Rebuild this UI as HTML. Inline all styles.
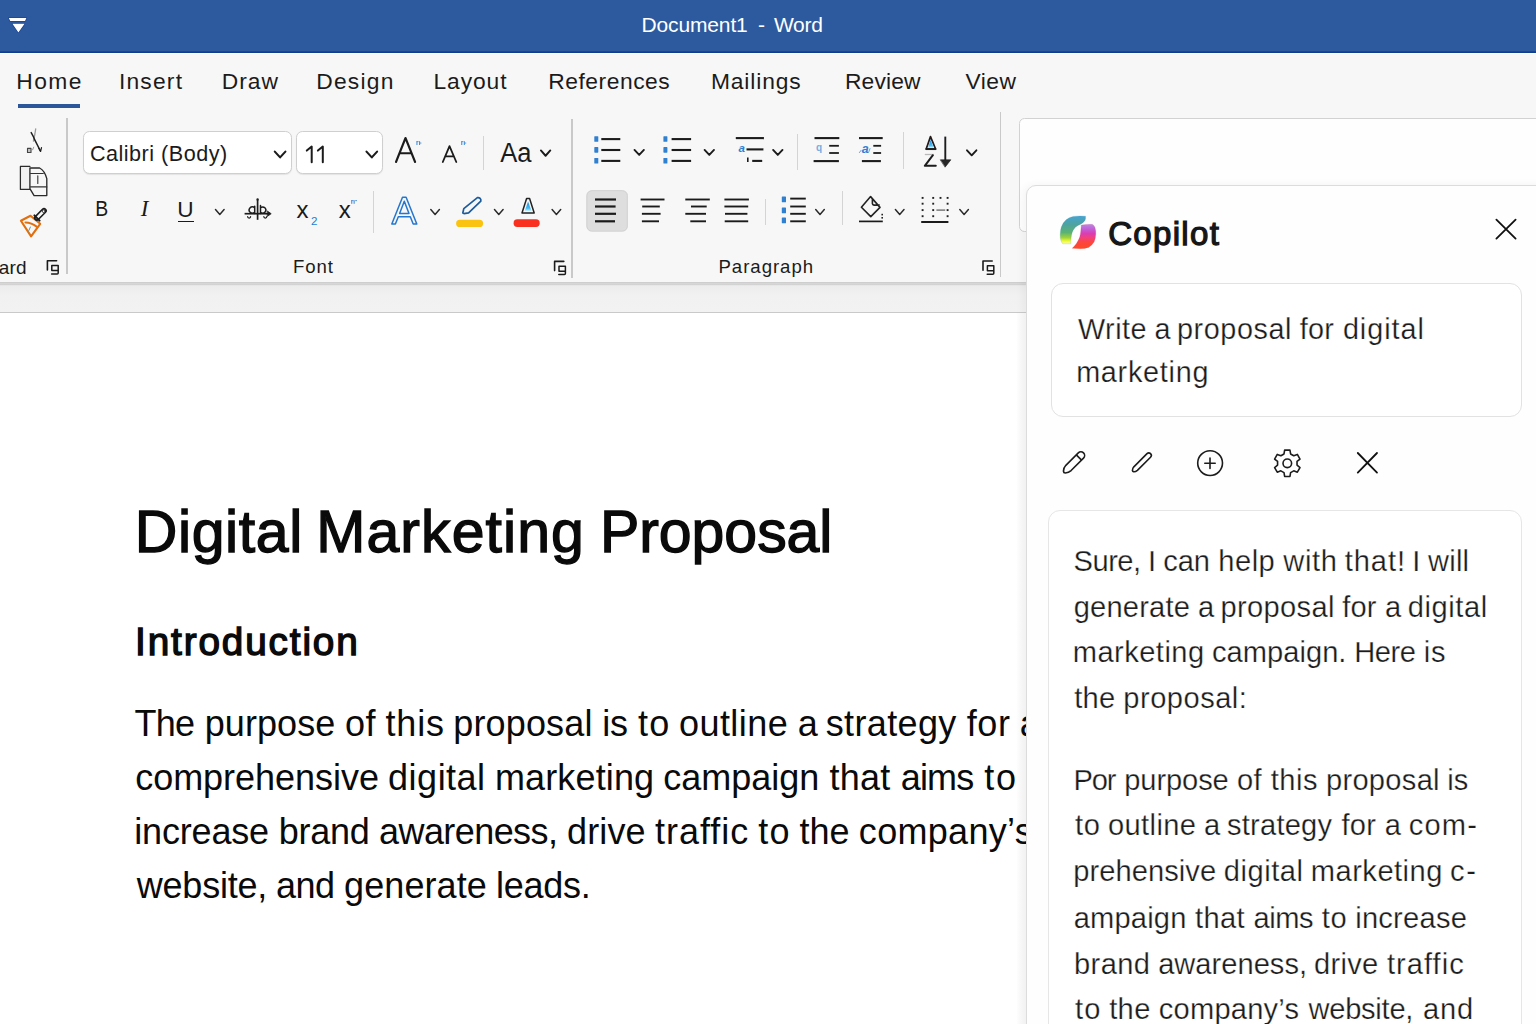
<!DOCTYPE html>
<html lang="en"><head><meta charset="utf-8"><title>Document1 - Word</title>
<style>
html,body{margin:0;padding:0;}
body{width:1536px;height:1024px;overflow:hidden;position:relative;background:#fff;font-family:"Liberation Sans",sans-serif;}
.t{position:absolute;white-space:pre;margin:0;padding:0;}
.a{position:absolute;}
svg{position:absolute;left:0;top:0;overflow:visible;}
.sf{font-family:"Liberation Serif",serif;}

</style></head>
<body>
<div class="a" style="left:0;top:0;width:1536px;height:54px;background:linear-gradient(#2d5a9f 0,#2d5a9f 50.6px,#1a4795 51.4px,#0f3c90 52.6px,#fdfdfd 53.2px,#fdfdfd 54px)"></div>
<div class="a" style="left:0;top:54px;width:1536px;height:229px;background:#f7f7f7"></div>
<div class="a" style="left:0;top:282px;width:1028px;height:31px;background:linear-gradient(#cdcdcd 0,#cfcfcf 1px,#d8d8d8 1.6px,#d2d2d2 2.6px,#d2d2d2 3.1px,#ececec 3.6px,#f1f1f1 14px,#f2f2f2 29.8px,#c9c9c9 30px,#c9c9c9 31px)"></div>
<div class="a" style="left:0;top:313px;width:1028px;height:711px;background:#fff"></div>
<div class="a" style="left:1019px;top:117.5px;width:540px;height:114px;background:#fefefe;border:1.2px solid #d2d2d2;border-radius:5.5px;box-sizing:border-box"></div>
<div class="a" style="left:1026.3px;top:185px;width:540px;height:860px;background:#fefefe;border:1px solid #dcdcdc;border-radius:10px 0 0 0;box-sizing:border-box;box-shadow:-3px 0 9px rgba(0,0,0,0.045)"></div>
<svg width="1536" height="52"><g fill="#fff" stroke="#0f3b8d" stroke-width="1.2" stroke-linejoin="round" paint-order="stroke"><path d="M8.8 18H26.4L25.1 20.9H10.2Z"/><path d="M12.4 23.8H24.6L18.4 32.4Z"/></g></svg>
<div class="t" style="left:641.42px;top:11.22px;font-size:21px;line-height:27px;color:#fff;letter-spacing:-0.124px;">Document1</div>
<div class="t" style="left:757.96px;top:11.22px;font-size:21px;line-height:27px;color:#fff;">-</div>
<div class="t" style="left:773.90px;top:11.22px;font-size:21px;line-height:27px;color:#fff;letter-spacing:-0.270px;">Word</div>
<div class="t" style="left:16.18px;top:66.30px;font-size:22.8px;line-height:30px;color:#1b1b1b;letter-spacing:1.491px;">Home</div>
<div class="t" style="left:118.95px;top:66.30px;font-size:22.8px;line-height:30px;color:#1b1b1b;letter-spacing:1.210px;">Insert</div>
<div class="t" style="left:221.68px;top:66.30px;font-size:22.8px;line-height:30px;color:#1b1b1b;letter-spacing:1.029px;">Draw</div>
<div class="t" style="left:316.18px;top:66.30px;font-size:22.8px;line-height:30px;color:#1b1b1b;letter-spacing:1.257px;">Design</div>
<div class="t" style="left:433.48px;top:66.30px;font-size:22.8px;line-height:30px;color:#1b1b1b;letter-spacing:0.925px;">Layout</div>
<div class="t" style="left:548.18px;top:66.30px;font-size:22.8px;line-height:30px;color:#1b1b1b;letter-spacing:0.556px;">References</div>
<div class="t" style="left:710.93px;top:66.30px;font-size:22.8px;line-height:30px;color:#1b1b1b;letter-spacing:0.885px;">Mailings</div>
<div class="t" style="left:844.93px;top:66.30px;font-size:22.8px;line-height:30px;color:#1b1b1b;letter-spacing:0.158px;">Review</div>
<div class="t" style="left:965.50px;top:66.30px;font-size:22.8px;line-height:30px;color:#1b1b1b;letter-spacing:0.493px;">View</div>
<div class="a" style="left:18px;top:104px;width:62px;height:3.6px;background:#2b579a"></div>
<div class="a" style="left:66.2px;top:118px;width:1.6px;height:156px;background:#c9c9c9"></div>
<div class="a" style="left:571.2px;top:119px;width:1.6px;height:158.5px;background:#c9c9c9"></div>
<div class="a" style="left:999.7px;top:111.5px;width:1.6px;height:165.5px;background:#c9c9c9"></div>
<div class="a" style="left:482.6px;top:135.6px;width:1.2px;height:34.400000000000006px;background:#d4d4d4"></div>
<div class="a" style="left:796.8px;top:134.4px;width:1.2px;height:35.599999999999994px;background:#d4d4d4"></div>
<div class="a" style="left:902.9px;top:131.7px;width:1.2px;height:37.5px;background:#d4d4d4"></div>
<div class="a" style="left:372.8px;top:191px;width:1.2px;height:42.30000000000001px;background:#d4d4d4"></div>
<div class="a" style="left:765.1px;top:198.9px;width:1.2px;height:25.799999999999983px;background:#d4d4d4"></div>
<div class="a" style="left:842px;top:190.6px;width:1.2px;height:34.400000000000006px;background:#d4d4d4"></div>
<div class="t" style="left:-1.26px;top:254.52px;font-size:19px;line-height:25px;color:#1b1b1b;letter-spacing:0.223px;">ard</div>
<div class="t" style="left:293.01px;top:255.26px;font-size:18.6px;line-height:24px;color:#1b1b1b;letter-spacing:0.929px;">Font</div>
<div class="t" style="left:718.51px;top:255.26px;font-size:18.6px;line-height:24px;color:#1b1b1b;letter-spacing:0.968px;">Paragraph</div>
<div class="a" style="left:82.6px;top:131.4px;width:209.4px;height:42.4px;background:#fff;border:1px solid #cfcfcf;border-radius:6.5px;box-sizing:border-box;box-shadow:0 1px 1px rgba(0,0,0,0.08)"></div>
<div class="a" style="left:295.6px;top:131.4px;width:87.8px;height:42.4px;background:#fff;border:1px solid #cfcfcf;border-radius:6.5px;box-sizing:border-box;box-shadow:0 1px 1px rgba(0,0,0,0.08)"></div>
<div class="t" style="left:89.92px;top:140.42px;font-size:21.6px;line-height:28px;color:#1b1b1b;letter-spacing:0.498px;">Calibri (Body)</div>
<div class="t" style="left:95.39px;top:194.37px;font-size:22.6px;line-height:29px;color:#1b1b1b;transform:scaleX(0.86);transform-origin:1.6px 0;">B</div>
<div class="t sf" style="left:140.72px;top:194.14px;font-size:23px;line-height:30px;color:#1b1b1b;font-style:italic;">I</div>
<div class="t" style="left:177.21px;top:194.67px;font-size:22.6px;line-height:29px;color:#1b1b1b;">U</div>
<div class="a" style="left:178.4px;top:220.7px;width:15.6px;height:1.7px;background:#1b1b1b"></div>
<div class="t" style="left:296.46px;top:194.18px;font-size:24px;line-height:31px;color:#1b1b1b;">x</div>
<div class="t" style="left:311.02px;top:213.18px;font-size:11.6px;line-height:15px;color:#2b7cd3;">2</div>
<div class="t" style="left:338.66px;top:194.18px;font-size:24px;line-height:31px;color:#1b1b1b;">x</div>
<div class="t" style="left:738.40px;top:141.12px;font-size:11.5px;line-height:15px;color:#2f80d0;font-weight:700;font-style:italic;">a</div>
<div class="t" style="left:816.00px;top:140.84px;font-size:10px;line-height:13px;color:#78ace0;font-weight:700;">q</div>
<div class="t" style="left:861.80px;top:140.67px;font-size:12.5px;line-height:16px;color:#2f80d0;font-weight:700;font-style:italic;">a</div>
<div class="t" style="left:500.30px;top:133.86px;font-size:28.4px;line-height:37px;color:#1b1b1b;transform:scaleX(0.9);transform-origin:1.9px 0;">Aa</div>
<svg width="1536" height="320"><path d="M306.8 150.6L311.7 146.6V162.2M317.9 150.6L322.8 146.6V162.2" stroke="#1b1b1b" stroke-width="2.0" fill="none" stroke-linejoin="round" stroke-linecap="round" stroke-linecap="butt"/><path d="M274.80 151.60L280.10 157.40L285.40 151.60" fill="none" stroke="#1b1b1b" stroke-width="2.1" stroke-linecap="round" stroke-linejoin="round"/><path d="M366.50 151.60L371.80 157.40L377.10 151.60" fill="none" stroke="#1b1b1b" stroke-width="2.1" stroke-linecap="round" stroke-linejoin="round"/><path d="M540.90 150.45L545.60 155.75L550.30 150.45" fill="none" stroke="#1b1b1b" stroke-width="1.9" stroke-linecap="round" stroke-linejoin="round"/><path d="M634.50 149.90L639.20 154.90L643.90 149.90" fill="none" stroke="#1b1b1b" stroke-width="1.9" stroke-linecap="round" stroke-linejoin="round"/><path d="M704.60 149.90L709.30 154.90L714.00 149.90" fill="none" stroke="#1b1b1b" stroke-width="1.9" stroke-linecap="round" stroke-linejoin="round"/><path d="M773.10 149.90L777.80 154.90L782.50 149.90" fill="none" stroke="#1b1b1b" stroke-width="1.9" stroke-linecap="round" stroke-linejoin="round"/><path d="M967.00 150.30L971.70 155.30L976.40 150.30" fill="none" stroke="#1b1b1b" stroke-width="1.9" stroke-linecap="round" stroke-linejoin="round"/><path d="M215.50 209.60L219.80 214.40L224.10 209.60" fill="none" stroke="#2a2a2a" stroke-width="1.5" stroke-linecap="round" stroke-linejoin="round"/><path d="M430.80 209.60L435.10 214.40L439.40 209.60" fill="none" stroke="#2a2a2a" stroke-width="1.5" stroke-linecap="round" stroke-linejoin="round"/><path d="M494.50 209.60L498.80 214.40L503.10 209.60" fill="none" stroke="#2a2a2a" stroke-width="1.5" stroke-linecap="round" stroke-linejoin="round"/><path d="M552.10 209.60L556.40 214.40L560.70 209.60" fill="none" stroke="#2a2a2a" stroke-width="1.5" stroke-linecap="round" stroke-linejoin="round"/><path d="M815.70 209.60L820.00 214.40L824.30 209.60" fill="none" stroke="#2a2a2a" stroke-width="1.5" stroke-linecap="round" stroke-linejoin="round"/><path d="M895.40 209.60L899.70 214.40L904.00 209.60" fill="none" stroke="#2a2a2a" stroke-width="1.5" stroke-linecap="round" stroke-linejoin="round"/><path d="M959.80 209.60L964.10 214.40L968.40 209.60" fill="none" stroke="#2a2a2a" stroke-width="1.5" stroke-linecap="round" stroke-linejoin="round"/><path d="M47.4 270.0V260.8H56.6" stroke="#1b1b1b" stroke-width="1.6" fill="none" stroke-linejoin="round" stroke-linecap="round" /><path d="M51.800000000000004 265.6h6.4v5h-6.4zM58.2 270.6v2.4q0 1-1 1h-5.6" stroke="#1b1b1b" stroke-width="1.5" fill="none" stroke-linejoin="round" stroke-linecap="round" /><path d="M554.5999999999999 270.6V261.40000000000003H563.8" stroke="#1b1b1b" stroke-width="1.6" fill="none" stroke-linejoin="round" stroke-linecap="round" /><path d="M559.0 266.20000000000005h6.4v5h-6.4zM565.4 271.20000000000005v2.4q0 1-1 1h-5.6" stroke="#1b1b1b" stroke-width="1.5" fill="none" stroke-linejoin="round" stroke-linecap="round" /><path d="M983.0 270.2V261.0H992.2" stroke="#1b1b1b" stroke-width="1.6" fill="none" stroke-linejoin="round" stroke-linecap="round" /><path d="M987.4000000000001 265.8h6.4v5h-6.4zM993.8000000000001 270.8v2.4q0 1-1 1h-5.6" stroke="#1b1b1b" stroke-width="1.5" fill="none" stroke-linejoin="round" stroke-linecap="round" /><path d="M35.7 128.8L34.9 134L33.4 141.2" stroke="#9a9a9a" stroke-width="1.3" fill="none" stroke-linejoin="round" stroke-linecap="round" /><path d="M31.2 132.6Q33.6 136.6 34.9 140.2L40.4 151" stroke="#1f1f1f" stroke-width="1.5" fill="none" stroke-linejoin="round" stroke-linecap="round" /><path d="M38.6 148L40.6 151.4L41.5 147.6" stroke="#1f1f1f" stroke-width="1.2" fill="none" stroke-linejoin="round" stroke-linecap="round" /><path d="M32.6 149.8L33.7 147.2" stroke="#999" stroke-width="1" fill="none" stroke-linejoin="round" stroke-linecap="round" /><path d="M27.5 148.4h3.5v4.1h-3.5z" stroke="#444" stroke-width="1.1" fill="#c4c4c4" stroke-linejoin="round" stroke-linecap="round" /><rect x="20.4" y="166.4" width="9.5" height="23" rx="0" fill="#f0f0f0"/><path d="M29.9 166.4H20.4V189.4H29.9" stroke="#2a2a2a" stroke-width="1.25" fill="none" stroke-linejoin="round" stroke-linecap="round" /><path d="M29.9 168H39.6Q44.6 170.6 46.8 178.6V195.6H34.1L29.9 188.6Z" stroke="#2a2a2a" stroke-width="1.35" fill="#f7f7f7" stroke-linejoin="round" stroke-linecap="round" /><path d="M30.5 173.5H43.3M30.5 186.9H46.8M37.8 175.8V183.4" stroke="#333" stroke-width="1.1" fill="none" stroke-linejoin="round" stroke-linecap="round" /><path d="M20.9 220.8L30.5 215.8L40.2 223.8L31.1 236.4Z" stroke="#e26f0e" stroke-width="2.1" fill="none" stroke-linejoin="round" stroke-linecap="round" /><path d="M25.4 222.4Q31.5 222.6 36.6 226.6" stroke="#e26f0e" stroke-width="2.0" fill="none" stroke-linejoin="round" stroke-linecap="round" /><path d="M30.4 227L28.9 230.4" stroke="#4a8f8f" stroke-width="0.9" fill="none" stroke-linejoin="round" stroke-linecap="round" /><path d="M36.8 218.0L44.0 210.8" stroke="#1d1d1d" stroke-width="5.8" stroke-linecap="round" fill="none"/><path d="M37.0 217.8L43.8 211.0" stroke="#f7f7f7" stroke-width="2.6" stroke-linecap="round" fill="none"/><path d="M34.4 215.4L39.6 220.6" stroke="#1d1d1d" stroke-width="2.0" stroke-linecap="round" fill="none"/><circle cx="43.6" cy="211.2" r="1.3" fill="#fff" stroke="#1d1d1d" stroke-width="0.9"/><path d="M396 162L405.5 138L415.1 162M399.6 153.2H411.4" stroke="#1b1b1b" stroke-width="2.1" fill="none" stroke-linejoin="round" stroke-linecap="round" /><path d="M442.8 162L449.5 146.2L456.3 162M445.5 156.3H453.6" stroke="#1b1b1b" stroke-width="1.8" fill="none" stroke-linejoin="round" stroke-linecap="round" /><rect x="416.4" y="141.2" width="1.1" height="3.8" rx="0" fill="#4a8fd6"/><rect x="419.0" y="141.2" width="1.1" height="3.8" rx="0" fill="#4a8fd6"/><rect x="416.59999999999997" y="141.2" width="2" height="0.9" rx="0" fill="#4a8fd6"/><rect x="419.59999999999997" y="142.6" width="1.8" height="0.9" rx="0" fill="#4a8fd6"/><rect x="461.2" y="141.2" width="1.1" height="3.8" rx="0" fill="#4a8fd6"/><rect x="463.8" y="141.2" width="1.1" height="3.8" rx="0" fill="#4a8fd6"/><rect x="461.4" y="141.2" width="2" height="0.9" rx="0" fill="#4a8fd6"/><rect x="464.4" y="142.6" width="1.8" height="0.9" rx="0" fill="#4a8fd6"/><rect x="351.2" y="200.2" width="1.1" height="3.6" rx="0" fill="#4a8fd6"/><rect x="353.6" y="200.2" width="1.1" height="3.6" rx="0" fill="#4a8fd6"/><rect x="351.2" y="200.2" width="2.4" height="0.9" rx="0" fill="#4a8fd6"/><rect x="355.2" y="200.2" width="1.8" height="0.9" rx="0" fill="#4a8fd6"/><path d="M244.6 213.7L269.4 213.7" stroke="#1d1d1d" stroke-width="1.7" stroke-linecap="butt" fill="none"/><path d="M267.6 211.2L271.2 213.7L267.6 216.2Z" stroke="#1d1d1d" stroke-width="0.8" fill="#1d1d1d" stroke-linejoin="round" stroke-linecap="round" /><path d="M257.6 200L257.6 219.8" stroke="#1d1d1d" stroke-width="1.7" stroke-linecap="butt" fill="none"/><path d="M254.6 212.4a3.2 3.3 0 1 1 0 -4.8M254.7 206.2v7.4M260.5 205.6v8M260.5 212.4a3.1 3.2 0 1 0 0 -4.6" stroke="#1d1d1d" stroke-width="1.5" fill="none" stroke-linejoin="round" stroke-linecap="round" /><path d="M247.6 216.6a1.5 1.5 0 1 0 3 0M263.8 216.6a1.5 1.5 0 1 0 3 0" stroke="#1d1d1d" stroke-width="1.2" fill="none" stroke-linejoin="round" stroke-linecap="round" /><circle cx="257.6" cy="199.4" r="1.2" fill="#1d1d1d"/><path d="M391.8 224L402.5 197.2H406.1L416.8 224H413.2L410.3 216.8H398.3L395.4 224ZM399.6 213.4L404.3 201.2L409 213.4Z" stroke="#2576cd" stroke-width="1.5" fill="none" stroke-linejoin="round" stroke-linecap="round" /><path d="M477.4 197.6a2.9 2.9 0 0 1 3.4 3.6L468.6 212.8L464 213.6L462.8 213L463.8 208.6Z" stroke="#1d5c9c" stroke-width="1.7" fill="none" stroke-linejoin="round" stroke-linecap="round" /><rect x="456.1" y="219.7" width="27" height="7.3" rx="3.6" fill="#fbc311"/><defs><linearGradient id="ga" x1="0" y1="0" x2="0" y2="1"><stop offset="0" stop-color="#1e86e0"/><stop offset="0.7" stop-color="#46c0f6"/><stop offset="1" stop-color="#dff4fd"/></linearGradient></defs><path d="M522 213L526.6 198.4H529.6L534.2 213Z" stroke="#222" stroke-width="1.5" fill="#f7f7f7" stroke-linejoin="round" stroke-linecap="round" /><path d="M524.6 211.2L528.1 201.4L531.6 211.2Z" stroke="none" stroke-width="0" fill="url(#ga)" stroke-linejoin="round" stroke-linecap="round" /><rect x="513.6" y="219.3" width="26.1" height="7.7" rx="3.7" fill="#f9301e"/><rect x="594.3" y="136.2" width="4" height="5.6" rx="0.6" fill="#2f80d0"/><path d="M601.3 139.1L620.3 139.1" stroke="#1b1b1b" stroke-width="2.1" stroke-linecap="butt" fill="none"/><rect x="594.3" y="147.1" width="4" height="5.6" rx="0.6" fill="#2f80d0"/><path d="M601.3 150.0L620.3 150.0" stroke="#1b1b1b" stroke-width="2.1" stroke-linecap="butt" fill="none"/><rect x="594.3" y="158.0" width="4" height="5.6" rx="0.6" fill="#2f80d0"/><path d="M601.3 160.9L620.3 160.9" stroke="#1b1b1b" stroke-width="2.1" stroke-linecap="butt" fill="none"/><rect x="663.4" y="136.2" width="4" height="5.6" rx="0.6" fill="#2f80d0"/><path d="M671.6 139.1L691.1 139.1" stroke="#1b1b1b" stroke-width="2.1" stroke-linecap="butt" fill="none"/><rect x="663.4" y="147.1" width="4" height="5.6" rx="0.6" fill="#2f80d0"/><path d="M671.6 150.0L691.1 150.0" stroke="#1b1b1b" stroke-width="2.1" stroke-linecap="butt" fill="none"/><rect x="663.4" y="158.0" width="4" height="5.6" rx="0.6" fill="#2f80d0"/><path d="M671.6 160.9L691.1 160.9" stroke="#1b1b1b" stroke-width="2.1" stroke-linecap="butt" fill="none"/><path d="M735.8 138.1L763.9 138.1" stroke="#1b1b1b" stroke-width="2.1" stroke-linecap="butt" fill="none"/><path d="M746.5 149.4L763.4 149.4" stroke="#1b1b1b" stroke-width="2.1" stroke-linecap="butt" fill="none"/><path d="M752.2 160.9L762.2 160.9" stroke="#1b1b1b" stroke-width="2.1" stroke-linecap="butt" fill="none"/><path d="M747.8 157.4L747.8 161.9" stroke="#1b1b1b" stroke-width="1.6" stroke-linecap="butt" fill="none"/><path d="M814.5 138.1L839.3 138.1" stroke="#1b1b1b" stroke-width="2.1" stroke-linecap="butt" fill="none"/><path d="M813.6 161.1L838.9 161.1" stroke="#1b1b1b" stroke-width="2.1" stroke-linecap="butt" fill="none"/><path d="M829.2 145.8L838.9 145.8" stroke="#1b1b1b" stroke-width="1.8" stroke-linecap="butt" fill="none"/><path d="M829.2 153L838.9 153" stroke="#1b1b1b" stroke-width="1.8" stroke-linecap="butt" fill="none"/><path d="M859 138.1L882.7 138.1" stroke="#1b1b1b" stroke-width="2.1" stroke-linecap="butt" fill="none"/><path d="M861.9 161.1L880.9 161.1" stroke="#1b1b1b" stroke-width="2.1" stroke-linecap="butt" fill="none"/><path d="M873.3 145.8L881.1 145.8" stroke="#1b1b1b" stroke-width="1.8" stroke-linecap="butt" fill="none"/><path d="M873.3 153L881.1 153" stroke="#1b1b1b" stroke-width="1.8" stroke-linecap="butt" fill="none"/><path d="M859.4 152.6L861 150.4M868.6 152.4L870 148.6" stroke="#6aa5dc" stroke-width="1.0" fill="none" stroke-linejoin="round" stroke-linecap="round" /><path d="M926.2 149L930.5 136.6L935.6 149Z" stroke="#241818" stroke-width="1.7" fill="#f7f7f7" stroke-linejoin="round" stroke-linecap="round" /><path d="M927.9 148L930.6 139.8L933.8 148Z" stroke="none" stroke-width="0" fill="url(#ga)" stroke-linejoin="round" stroke-linecap="round" /><path d="M925.6 149.1L936.2 149.1" stroke="#1d1d1d" stroke-width="1.9" stroke-linecap="butt" fill="none"/><path d="M924.8 154.5L933.6 154.5" stroke="#b8b8b8" stroke-width="1.3" stroke-linecap="butt" fill="none"/><path d="M932.9 155.2L924.8 165.8H935.8" stroke="#1d1d1d" stroke-width="2.0" fill="none" stroke-linejoin="round" stroke-linecap="round" /><path d="M945.3 136.6L945.3 160.5" stroke="#1d1d1d" stroke-width="1.9" stroke-linecap="butt" fill="none"/><path d="M940.6 159.8H950.9L945.3 166.9Z" stroke="#1d1d1d" stroke-width="0.6" fill="#262626" stroke-linejoin="round" stroke-linecap="round" /><rect x="586.4" y="190.2" width="41.4" height="41.4" rx="5.5" fill="#dedede"/><rect x="586.9" y="190.7" width="40.4" height="40.4" rx="5" fill="none" stroke="#d2d2d2" stroke-width="1"/><path d="M595 199.5L616 199.5" stroke="#1b1b1b" stroke-width="2.2" stroke-linecap="butt" fill="none"/><path d="M595 206.5L615.6 206.5" stroke="#1b1b1b" stroke-width="2.2" stroke-linecap="butt" fill="none"/><path d="M595 213.8L616 213.8" stroke="#1b1b1b" stroke-width="2.2" stroke-linecap="butt" fill="none"/><path d="M595 221.3L615 221.3" stroke="#1b1b1b" stroke-width="2.2" stroke-linecap="butt" fill="none"/><path d="M640.6 199.5L664.5 199.5" stroke="#1b1b1b" stroke-width="1.9" stroke-linecap="butt" fill="none"/><path d="M642.2 206.5L659.8 206.5" stroke="#1b1b1b" stroke-width="1.9" stroke-linecap="butt" fill="none"/><path d="M641.9 213.8L660.6 213.8" stroke="#1b1b1b" stroke-width="1.9" stroke-linecap="butt" fill="none"/><path d="M641.9 221.3L659 221.3" stroke="#1b1b1b" stroke-width="1.9" stroke-linecap="butt" fill="none"/><path d="M685.3 199.5L709.8 199.5" stroke="#1b1b1b" stroke-width="1.9" stroke-linecap="butt" fill="none"/><path d="M691 206.5L706.7 206.5" stroke="#1b1b1b" stroke-width="1.9" stroke-linecap="butt" fill="none"/><path d="M685.3 213.8L706 213.8" stroke="#1b1b1b" stroke-width="1.9" stroke-linecap="butt" fill="none"/><path d="M690.3 221.3L706 221.3" stroke="#1b1b1b" stroke-width="1.9" stroke-linecap="butt" fill="none"/><path d="M724.4 199.5L748.9 199.5" stroke="#1b1b1b" stroke-width="1.9" stroke-linecap="butt" fill="none"/><path d="M724.4 206.5L748.2 206.5" stroke="#1b1b1b" stroke-width="1.9" stroke-linecap="butt" fill="none"/><path d="M725 213.8L747.4 213.8" stroke="#1b1b1b" stroke-width="1.9" stroke-linecap="butt" fill="none"/><path d="M724.7 221.3L748.2 221.3" stroke="#1b1b1b" stroke-width="1.9" stroke-linecap="butt" fill="none"/><rect x="781.8" y="196.5" width="4.2" height="5.8" rx="0.6" fill="#2f80d0"/><rect x="781.8" y="207.5" width="4.2" height="5.8" rx="0.6" fill="#2f80d0"/><rect x="781.8" y="217.5" width="4.2" height="5.8" rx="0.6" fill="#2f80d0"/><path d="M790.2 198.6L805.8 198.6" stroke="#1b1b1b" stroke-width="1.9" stroke-linecap="butt" fill="none"/><path d="M790.2 206.5L805.8 206.5" stroke="#1b1b1b" stroke-width="1.9" stroke-linecap="butt" fill="none"/><path d="M790.2 213.8L805.8 213.8" stroke="#1b1b1b" stroke-width="1.9" stroke-linecap="butt" fill="none"/><path d="M790.2 221.3L805.8 221.3" stroke="#1b1b1b" stroke-width="1.9" stroke-linecap="butt" fill="none"/><path d="M870.6 196.6L861.4 207.2L870.8 216.6L880 207.4ZM872.4 199.2V203.7Q872.6 205 874 205.1H879.2" stroke="#222" stroke-width="1.6" fill="none" stroke-linejoin="round" stroke-linecap="round" /><path d="M859 221.4L882.8 221.4" stroke="#1b1b1b" stroke-width="1.7" stroke-linecap="butt" fill="none"/><rect x="881.4" y="213.8" width="1.6" height="1.6" rx="0" fill="#222"/><rect x="881.4" y="217" width="1.6" height="1.6" rx="0" fill="#222"/><path d="M921.2 222L948.4 222" stroke="#1b1b1b" stroke-width="2.0" stroke-linecap="butt" fill="none"/><rect x="921.65" y="196.95000000000002" width="1.9" height="1.9" rx="0" fill="#222"/><rect x="921.65" y="202.75" width="1.9" height="1.9" rx="0" fill="#222"/><rect x="921.65" y="209.15" width="1.9" height="1.9" rx="0" fill="#222"/><rect x="921.65" y="215.25" width="1.9" height="1.9" rx="0" fill="#222"/><rect x="932.25" y="196.95000000000002" width="1.9" height="1.9" rx="0" fill="#222"/><rect x="932.25" y="202.75" width="1.9" height="1.9" rx="0" fill="#222"/><rect x="932.25" y="209.15" width="1.9" height="1.9" rx="0" fill="#222"/><rect x="932.25" y="215.25" width="1.9" height="1.9" rx="0" fill="#222"/><rect x="946.65" y="196.95000000000002" width="1.9" height="1.9" rx="0" fill="#222"/><rect x="946.65" y="202.75" width="1.9" height="1.9" rx="0" fill="#222"/><rect x="946.65" y="209.15" width="1.9" height="1.9" rx="0" fill="#222"/><rect x="946.65" y="215.25" width="1.9" height="1.9" rx="0" fill="#222"/><rect x="939.55" y="196.95000000000002" width="1.9" height="1.9" rx="0" fill="#222"/><path d="M936.4 210.1L945.2 210.1" stroke="#666" stroke-width="1.3" stroke-linecap="butt" fill="none"/></svg>
<div class="a" style="left:1016px;top:313px;width:11px;height:711px;background:linear-gradient(90deg,rgba(255,255,255,0),rgba(240,240,240,0.85))"></div>
<div class="t" style="left:134.76px;top:493.86px;font-size:59px;line-height:77px;color:#0a0a0a;letter-spacing:0.597px;-webkit-text-stroke:1.35px #0a0a0a;">Digital</div>
<div class="t" style="left:316.25px;top:493.86px;font-size:59px;line-height:77px;color:#0a0a0a;letter-spacing:1.075px;-webkit-text-stroke:1.35px #0a0a0a;">Marketing</div>
<div class="t" style="left:599.95px;top:493.86px;font-size:59px;line-height:77px;color:#0a0a0a;letter-spacing:-0.049px;-webkit-text-stroke:1.35px #0a0a0a;">Proposal</div>
<div class="t" style="left:135.12px;top:617.39px;font-size:38.7px;line-height:50px;color:#0a0a0a;letter-spacing:1.863px;-webkit-text-stroke:1.4px #0a0a0a;">Introduction</div>
<div class="t" style="left:134.48px;top:699.93px;font-size:36px;line-height:47px;color:#0a0a0a;letter-spacing:-0.757px;">The</div>
<div class="t" style="left:204.69px;top:699.93px;font-size:36px;line-height:47px;color:#0a0a0a;letter-spacing:0.074px;">purpose</div>
<div class="t" style="left:344.92px;top:699.93px;font-size:36px;line-height:47px;color:#0a0a0a;letter-spacing:0.618px;">of</div>
<div class="t" style="left:385.56px;top:699.93px;font-size:36px;line-height:47px;color:#0a0a0a;letter-spacing:0.784px;">this</div>
<div class="t" style="left:453.21px;top:699.93px;font-size:36px;line-height:47px;color:#0a0a0a;letter-spacing:0.166px;">proposal</div>
<div class="t" style="left:602.20px;top:699.93px;font-size:36px;line-height:47px;color:#0a0a0a;letter-spacing:-0.075px;">is</div>
<div class="t" style="left:637.88px;top:699.93px;font-size:36px;line-height:47px;color:#0a0a0a;letter-spacing:1.489px;">to</div>
<div class="t" style="left:678.97px;top:699.93px;font-size:36px;line-height:47px;color:#0a0a0a;letter-spacing:0.439px;">outline</div>
<div class="t" style="left:797.67px;top:699.93px;font-size:36px;line-height:47px;color:#0a0a0a;">a</div>
<div class="t" style="left:825.72px;top:699.93px;font-size:36px;line-height:47px;color:#0a0a0a;letter-spacing:0.367px;">strategy</div>
<div class="t" style="left:966.68px;top:699.93px;font-size:36px;line-height:47px;color:#0a0a0a;letter-spacing:0.676px;">for</div>
<div class="t" style="left:1019.65px;top:699.93px;font-size:36px;line-height:47px;color:#0a0a0a;">a</div>
<div class="t" style="left:135.16px;top:754.03px;font-size:36px;line-height:47px;color:#0a0a0a;letter-spacing:-0.022px;">comprehensive</div>
<div class="t" style="left:388.12px;top:754.03px;font-size:36px;line-height:47px;color:#0a0a0a;letter-spacing:0.492px;">digital</div>
<div class="t" style="left:494.89px;top:754.03px;font-size:36px;line-height:47px;color:#0a0a0a;letter-spacing:0.150px;">marketing</div>
<div class="t" style="left:663.29px;top:754.03px;font-size:36px;line-height:47px;color:#0a0a0a;letter-spacing:-0.007px;">campaign</div>
<div class="t" style="left:829.42px;top:754.03px;font-size:36px;line-height:47px;color:#0a0a0a;letter-spacing:0.259px;">that</div>
<div class="t" style="left:900.72px;top:754.03px;font-size:36px;line-height:47px;color:#0a0a0a;letter-spacing:-0.862px;">aims</div>
<div class="t" style="left:984.22px;top:754.03px;font-size:36px;line-height:47px;color:#0a0a0a;letter-spacing:1.857px;">to</div>
<div class="t" style="left:134.26px;top:808.03px;font-size:36px;line-height:47px;color:#0a0a0a;letter-spacing:-0.179px;">increase</div>
<div class="t" style="left:278.79px;top:808.03px;font-size:36px;line-height:47px;color:#0a0a0a;letter-spacing:-0.271px;">brand</div>
<div class="t" style="left:379.03px;top:808.03px;font-size:36px;line-height:47px;color:#0a0a0a;letter-spacing:-0.572px;">awareness,</div>
<div class="t" style="left:566.97px;top:808.03px;font-size:36px;line-height:47px;color:#0a0a0a;letter-spacing:0.147px;">drive</div>
<div class="t" style="left:655.10px;top:808.03px;font-size:36px;line-height:47px;color:#0a0a0a;letter-spacing:0.962px;">traffic</div>
<div class="t" style="left:758.19px;top:808.03px;font-size:36px;line-height:47px;color:#0a0a0a;letter-spacing:1.207px;">to</div>
<div class="t" style="left:799.45px;top:808.03px;font-size:36px;line-height:47px;color:#0a0a0a;letter-spacing:0.041px;">the</div>
<div class="t" style="left:858.83px;top:808.03px;font-size:36px;line-height:47px;color:#0a0a0a;letter-spacing:0.300px;">company’s</div>
<div class="t" style="left:136.78px;top:862.03px;font-size:36px;line-height:47px;color:#0a0a0a;letter-spacing:-0.217px;">website,</div>
<div class="t" style="left:276.02px;top:862.03px;font-size:36px;line-height:47px;color:#0a0a0a;letter-spacing:-0.577px;">and</div>
<div class="t" style="left:344.02px;top:862.03px;font-size:36px;line-height:47px;color:#0a0a0a;letter-spacing:0.105px;">generate</div>
<div class="t" style="left:495.93px;top:862.03px;font-size:36px;line-height:47px;color:#0a0a0a;letter-spacing:-0.242px;">leads.</div>
<div class="a" style="left:1026.3px;top:313px;width:510px;height:711px;background:#fefefe;border-left:1px solid #dcdcdc;box-sizing:border-box"></div>
<div class="t" style="left:1108.15px;top:212.17px;font-size:33px;line-height:43px;color:#161616;letter-spacing:1.337px;-webkit-text-stroke:1.25px #161616;">Copilot</div>
<div class="a" style="left:1050.9px;top:283.2px;width:470.8px;height:133.6px;background:#fff;border:1px solid #e2e2e2;border-radius:12px;box-sizing:border-box"></div>
<div class="t" style="left:1077.90px;top:311.02px;font-size:28.8px;line-height:37px;color:#1c1c1c;letter-spacing:0.495px;-webkit-text-stroke:0.25px #fff;">Write</div>
<div class="t" style="left:1154.55px;top:311.02px;font-size:28.8px;line-height:37px;color:#1c1c1c;-webkit-text-stroke:0.25px #fff;">a</div>
<div class="t" style="left:1176.90px;top:311.02px;font-size:28.8px;line-height:37px;color:#1c1c1c;letter-spacing:0.592px;-webkit-text-stroke:0.25px #fff;">proposal</div>
<div class="t" style="left:1299.65px;top:311.02px;font-size:28.8px;line-height:37px;color:#1c1c1c;letter-spacing:0.269px;-webkit-text-stroke:0.25px #fff;">for</div>
<div class="t" style="left:1342.90px;top:311.02px;font-size:28.8px;line-height:37px;color:#1c1c1c;letter-spacing:0.960px;-webkit-text-stroke:0.25px #fff;">digital</div>
<div class="t" style="left:1076.13px;top:354.22px;font-size:28.8px;line-height:37px;color:#1c1c1c;letter-spacing:0.734px;-webkit-text-stroke:0.25px #fff;">marketing</div>
<div class="a" style="left:1047.9px;top:510.2px;width:473.8px;height:560px;background:#fff;border:1px solid #e6e6e6;border-radius:12px;box-sizing:border-box"></div>
<div class="t" style="left:1073.59px;top:542.12px;font-size:29.1px;line-height:38px;color:#1c1c1c;letter-spacing:-0.519px;-webkit-text-stroke:0.25px #fff;">Sure,</div>
<div class="t" style="left:1148.04px;top:542.12px;font-size:29.1px;line-height:38px;color:#1c1c1c;-webkit-text-stroke:0.25px #fff;">I</div>
<div class="t" style="left:1163.31px;top:542.12px;font-size:29.1px;line-height:38px;color:#1c1c1c;letter-spacing:-0.107px;-webkit-text-stroke:0.25px #fff;">can</div>
<div class="t" style="left:1218.31px;top:542.12px;font-size:29.1px;line-height:38px;color:#1c1c1c;letter-spacing:0.484px;-webkit-text-stroke:0.25px #fff;">help</div>
<div class="t" style="left:1283.25px;top:542.12px;font-size:29.1px;line-height:38px;color:#1c1c1c;letter-spacing:0.684px;-webkit-text-stroke:0.25px #fff;">with</div>
<div class="t" style="left:1344.75px;top:542.12px;font-size:29.1px;line-height:38px;color:#1c1c1c;letter-spacing:0.930px;-webkit-text-stroke:0.25px #fff;">that!</div>
<div class="t" style="left:1412.18px;top:542.12px;font-size:29.1px;line-height:38px;color:#1c1c1c;-webkit-text-stroke:0.25px #fff;">I</div>
<div class="t" style="left:1427.94px;top:542.12px;font-size:29.1px;line-height:38px;color:#1c1c1c;letter-spacing:0.233px;-webkit-text-stroke:0.25px #fff;">will</div>
<div class="t" style="left:1073.74px;top:587.52px;font-size:29.1px;line-height:38px;color:#1c1c1c;letter-spacing:0.179px;-webkit-text-stroke:0.25px #fff;">generate</div>
<div class="t" style="left:1198.01px;top:587.52px;font-size:29.1px;line-height:38px;color:#1c1c1c;-webkit-text-stroke:0.25px #fff;">a</div>
<div class="t" style="left:1220.48px;top:587.52px;font-size:29.1px;line-height:38px;color:#1c1c1c;letter-spacing:0.343px;-webkit-text-stroke:0.25px #fff;">proposal</div>
<div class="t" style="left:1342.27px;top:587.52px;font-size:29.1px;line-height:38px;color:#1c1c1c;letter-spacing:0.084px;-webkit-text-stroke:0.25px #fff;">for</div>
<div class="t" style="left:1384.99px;top:587.52px;font-size:29.1px;line-height:38px;color:#1c1c1c;-webkit-text-stroke:0.25px #fff;">a</div>
<div class="t" style="left:1407.85px;top:587.52px;font-size:29.1px;line-height:38px;color:#1c1c1c;letter-spacing:0.542px;-webkit-text-stroke:0.25px #fff;">digital</div>
<div class="t" style="left:1072.71px;top:633.02px;font-size:29.1px;line-height:38px;color:#1c1c1c;letter-spacing:0.461px;-webkit-text-stroke:0.25px #fff;">marketing</div>
<div class="t" style="left:1212.04px;top:633.02px;font-size:29.1px;line-height:38px;color:#1c1c1c;letter-spacing:0.023px;-webkit-text-stroke:0.25px #fff;">campaign.</div>
<div class="t" style="left:1354.17px;top:633.02px;font-size:29.1px;line-height:38px;color:#1c1c1c;letter-spacing:-0.454px;-webkit-text-stroke:0.25px #fff;">Here</div>
<div class="t" style="left:1423.66px;top:633.02px;font-size:29.1px;line-height:38px;color:#1c1c1c;letter-spacing:0.804px;-webkit-text-stroke:0.25px #fff;">is</div>
<div class="t" style="left:1074.16px;top:678.72px;font-size:29.1px;line-height:38px;color:#1c1c1c;letter-spacing:0.251px;-webkit-text-stroke:0.25px #fff;">the</div>
<div class="t" style="left:1123.30px;top:678.72px;font-size:29.1px;line-height:38px;color:#1c1c1c;letter-spacing:0.484px;-webkit-text-stroke:0.25px #fff;">proposal:</div>
<div class="t" style="left:1073.47px;top:760.82px;font-size:29.1px;line-height:38px;color:#1c1c1c;letter-spacing:-1.173px;-webkit-text-stroke:0.25px #fff;">Por</div>
<div class="t" style="left:1124.27px;top:760.82px;font-size:29.1px;line-height:38px;color:#1c1c1c;letter-spacing:-0.108px;-webkit-text-stroke:0.25px #fff;">purpose</div>
<div class="t" style="left:1236.98px;top:760.82px;font-size:29.1px;line-height:38px;color:#1c1c1c;letter-spacing:0.248px;-webkit-text-stroke:0.25px #fff;">of</div>
<div class="t" style="left:1270.64px;top:760.82px;font-size:29.1px;line-height:38px;color:#1c1c1c;letter-spacing:0.512px;-webkit-text-stroke:0.25px #fff;">this</div>
<div class="t" style="left:1325.95px;top:760.82px;font-size:29.1px;line-height:38px;color:#1c1c1c;letter-spacing:0.291px;-webkit-text-stroke:0.25px #fff;">proposal</div>
<div class="t" style="left:1447.37px;top:760.82px;font-size:29.1px;line-height:38px;color:#1c1c1c;letter-spacing:-0.105px;-webkit-text-stroke:0.25px #fff;">is</div>
<div class="t" style="left:1074.96px;top:806.22px;font-size:29.1px;line-height:38px;color:#1c1c1c;letter-spacing:0.781px;-webkit-text-stroke:0.25px #fff;">to</div>
<div class="t" style="left:1108.06px;top:806.22px;font-size:29.1px;line-height:38px;color:#1c1c1c;letter-spacing:0.357px;-webkit-text-stroke:0.25px #fff;">outline</div>
<div class="t" style="left:1204.10px;top:806.22px;font-size:29.1px;line-height:38px;color:#1c1c1c;-webkit-text-stroke:0.25px #fff;">a</div>
<div class="t" style="left:1227.07px;top:806.22px;font-size:29.1px;line-height:38px;color:#1c1c1c;letter-spacing:0.206px;-webkit-text-stroke:0.25px #fff;">strategy</div>
<div class="t" style="left:1341.44px;top:806.22px;font-size:29.1px;line-height:38px;color:#1c1c1c;letter-spacing:0.311px;-webkit-text-stroke:0.25px #fff;">for</div>
<div class="t" style="left:1384.86px;top:806.22px;font-size:29.1px;line-height:38px;color:#1c1c1c;-webkit-text-stroke:0.25px #fff;">a</div>
<div class="t" style="left:1408.82px;top:806.22px;font-size:29.1px;line-height:38px;color:#1c1c1c;letter-spacing:1.136px;-webkit-text-stroke:0.25px #fff;">com</div>
<div class="t" style="left:1467.24px;top:806.22px;font-size:29.1px;line-height:38px;color:#1c1c1c;-webkit-text-stroke:0.25px #fff;">-</div>
<div class="t" style="left:1073.15px;top:852.32px;font-size:29.1px;line-height:38px;color:#1c1c1c;letter-spacing:0.068px;-webkit-text-stroke:0.25px #fff;">prehensive</div>
<div class="t" style="left:1223.83px;top:852.32px;font-size:29.1px;line-height:38px;color:#1c1c1c;letter-spacing:0.535px;-webkit-text-stroke:0.25px #fff;">digital</div>
<div class="t" style="left:1310.86px;top:852.32px;font-size:29.1px;line-height:38px;color:#1c1c1c;letter-spacing:0.467px;-webkit-text-stroke:0.25px #fff;">marketing</div>
<div class="t" style="left:1450.04px;top:852.32px;font-size:29.1px;line-height:38px;color:#1c1c1c;-webkit-text-stroke:0.25px #fff;">c</div>
<div class="t" style="left:1466.24px;top:852.32px;font-size:29.1px;line-height:38px;color:#1c1c1c;-webkit-text-stroke:0.25px #fff;">-</div>
<div class="t" style="left:1073.74px;top:898.52px;font-size:29.1px;line-height:38px;color:#1c1c1c;letter-spacing:0.173px;-webkit-text-stroke:0.25px #fff;">ampaign</div>
<div class="t" style="left:1194.94px;top:898.52px;font-size:29.1px;line-height:38px;color:#1c1c1c;letter-spacing:0.409px;-webkit-text-stroke:0.25px #fff;">that</div>
<div class="t" style="left:1253.42px;top:898.52px;font-size:29.1px;line-height:38px;color:#1c1c1c;letter-spacing:-0.391px;-webkit-text-stroke:0.25px #fff;">aims</div>
<div class="t" style="left:1321.83px;top:898.52px;font-size:29.1px;line-height:38px;color:#1c1c1c;letter-spacing:0.679px;-webkit-text-stroke:0.25px #fff;">to</div>
<div class="t" style="left:1355.16px;top:898.52px;font-size:29.1px;line-height:38px;color:#1c1c1c;letter-spacing:0.258px;-webkit-text-stroke:0.25px #fff;">increase</div>
<div class="t" style="left:1074.05px;top:945.22px;font-size:29.1px;line-height:38px;color:#1c1c1c;letter-spacing:0.387px;-webkit-text-stroke:0.25px #fff;">brand</div>
<div class="t" style="left:1158.13px;top:945.22px;font-size:29.1px;line-height:38px;color:#1c1c1c;letter-spacing:0.015px;-webkit-text-stroke:0.25px #fff;">awareness,</div>
<div class="t" style="left:1313.94px;top:945.22px;font-size:29.1px;line-height:38px;color:#1c1c1c;letter-spacing:0.313px;-webkit-text-stroke:0.25px #fff;">drive</div>
<div class="t" style="left:1387.03px;top:945.22px;font-size:29.1px;line-height:38px;color:#1c1c1c;letter-spacing:1.022px;-webkit-text-stroke:0.25px #fff;">traffic</div>
<div class="t" style="left:1074.96px;top:990.02px;font-size:29.1px;line-height:38px;color:#1c1c1c;letter-spacing:1.163px;-webkit-text-stroke:0.25px #fff;">to</div>
<div class="t" style="left:1109.20px;top:990.02px;font-size:29.1px;line-height:38px;color:#1c1c1c;letter-spacing:0.354px;-webkit-text-stroke:0.25px #fff;">the</div>
<div class="t" style="left:1158.84px;top:990.02px;font-size:29.1px;line-height:38px;color:#1c1c1c;letter-spacing:0.204px;-webkit-text-stroke:0.25px #fff;">company’s</div>
<div class="t" style="left:1308.47px;top:990.02px;font-size:29.1px;line-height:38px;color:#1c1c1c;letter-spacing:-0.258px;-webkit-text-stroke:0.25px #fff;">website,</div>
<div class="t" style="left:1422.99px;top:990.02px;font-size:29.1px;line-height:38px;color:#1c1c1c;letter-spacing:0.851px;-webkit-text-stroke:0.25px #fff;">and</div>
<svg width="1536" height="1024"><path d="M1496.4 219.6L1515.6 238.6M1515.6 219.6L1496.4 238.6" stroke="#111" stroke-width="1.8" fill="none" stroke-linejoin="round" stroke-linecap="round"/><path d="M1357.8 453L1377 472.6M1377 453L1357.8 472.6" stroke="#111" stroke-width="1.8" fill="none" stroke-linejoin="round" stroke-linecap="round"/><g transform="translate(1073.7 462.7) rotate(45)" fill="none" stroke="#1c1c1c" stroke-width="1.6" stroke-linejoin="round"><path d="M-3.7 -10.2a3.7 3.7 0 0 1 7.4 0V7.4Q3.6 10.6 1.3 13.2Q0 14.4 -1.3 13.2Q-3.6 10.6 -3.7 7.4Z"/><path d="M-3.7 -7.4H3.7"/></g><g transform="translate(1141.7 462.5) rotate(45)" fill="none" stroke="#1c1c1c" stroke-width="1.6" stroke-linejoin="round"><path d="M-2.5 -10a2.5 2.5 0 0 1 5 0V8.6Q2.3 11 0.9 12.2Q0 12.8 -0.9 12.2Q-2.3 11 -2.5 8.6Z"/></g><circle cx="1210.1" cy="463.1" r="12.4" fill="none" stroke="#1c1c1c" stroke-width="1.6"/><path d="M1204.8 463.2H1215.2M1210 458V468.5" stroke="#1c1c1c" stroke-width="1.6" fill="none" stroke-linejoin="round" stroke-linecap="round"/><path d="M1284.00 453.97L1284.64 450.17L1289.96 450.17L1290.60 453.97L1293.73 455.77L1297.34 454.43L1300.00 459.04L1297.03 461.49L1297.03 465.11L1300.00 467.56L1297.34 472.17L1293.73 470.83L1290.60 472.63L1289.96 476.43L1284.64 476.43L1284.00 472.63L1280.87 470.83L1277.26 472.17L1274.60 467.56L1277.57 465.11L1277.57 461.49L1274.60 459.04L1277.26 454.43L1280.87 455.77Z" stroke="#1c1c1c" stroke-width="1.6" fill="none" stroke-linejoin="round" stroke-linecap="round"/><circle cx="1287.3" cy="463.3" r="4.3" fill="none" stroke="#1c1c1c" stroke-width="1.6"/><defs><linearGradient id="lg1" gradientUnits="userSpaceOnUse" x1="0" y1="216" x2="0" y2="244.5"><stop offset="0" stop-color="#46a3d2"/><stop offset="0.3" stop-color="#4ea3a0"/><stop offset="0.58" stop-color="#5bb272"/><stop offset="0.76" stop-color="#9fd23e"/><stop offset="0.88" stop-color="#f0fb2c"/><stop offset="1" stop-color="#fdffd8"/></linearGradient><linearGradient id="lg2" gradientUnits="userSpaceOnUse" x1="0" y1="224" x2="0" y2="249"><stop offset="0" stop-color="#b98be6"/><stop offset="0.2" stop-color="#c260d6"/><stop offset="0.38" stop-color="#da3db4"/><stop offset="0.55" stop-color="#f2417c"/><stop offset="0.72" stop-color="#fb4540"/><stop offset="1" stop-color="#ff4a22"/></linearGradient></defs><path d="M1085.6 216.2Q1079 215.6 1073.1 216.4Q1069 217.4 1066.1 219.7Q1062.8 222.6 1061.4 226.8Q1060.2 230.4 1060.2 234.3Q1060.1 237.4 1060.7 239.9Q1061.4 242.4 1062.8 243.8L1070.8 243.8Q1070.6 241 1071 238.5Q1071.3 235.2 1072.2 232.4Q1073.4 229.4 1075.4 227.2Q1077.8 225.2 1081.1 223.9Q1083.6 222.6 1084.8 220.7Q1085.9 219 1085.6 216.2Z" fill="url(#lg1)" stroke="#2a8aa6" stroke-opacity="0.35" stroke-width="0.5"/><path d="M1081.3 225.1Q1087 224 1092.3 224.3Q1094.4 225.4 1095.1 227.7Q1096 230.8 1095.8 234.3Q1095.6 238.4 1094.2 241.8Q1092.2 245.4 1088.6 247.4Q1084.8 248.8 1080.1 248.8L1072.2 248.3Q1074.6 246.2 1076.4 243.6Q1078.4 240.6 1079.7 237.1Q1080.6 234 1080.8 230.5Q1081.1 227.8 1081.3 225.1Z" fill="url(#lg2)" stroke="#e0304a" stroke-opacity="0.3" stroke-width="0.5"/></svg>
</body></html>
